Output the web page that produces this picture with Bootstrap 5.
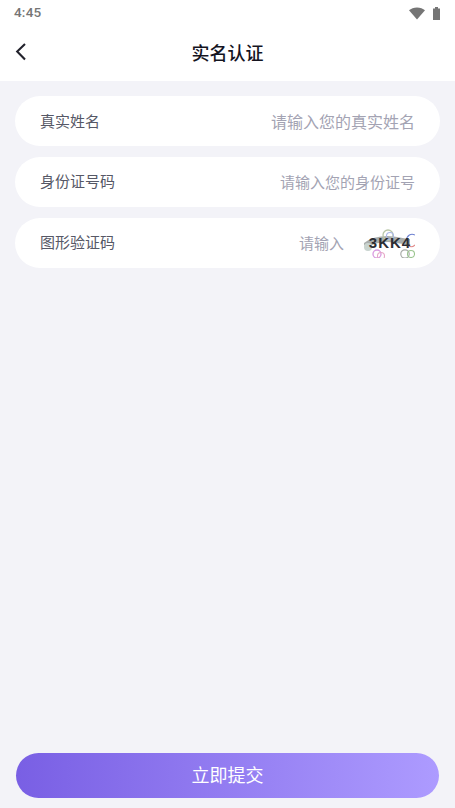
<!DOCTYPE html>
<html lang="zh-CN">
<head>
<meta charset="utf-8">
<title>实名认证</title>
<link rel="stylesheet" href="https://cdn.jsdelivr.net/npm/bootstrap@5.3.0/dist/css/bootstrap.min.css">
<style>
html,body{margin:0;height:808px;overflow:hidden}
body{font-family:"Noto Sans CJK SC","Roboto",sans-serif;background:#f3f3f8}
.screen{height:808px;background:#f3f3f8}
.topbar{background:#fff;height:81px}
.status-row{height:26px;padding:0 15px 0 14px;color:#757575}
.status-time{font:500 13.5px/1 Roboto,sans-serif;color:#757575;letter-spacing:.2px}
.title-row{height:55px}
.nav-title{font-size:18px;font-weight:500;color:#14141f;line-height:1;margin-top:-3px}
.back-btn{left:15px;top:50%;margin-top:-12px;line-height:0;background:none;border:0;padding:0}
.form-stack{padding:15px 15px 0;gap:10.4px}
.field-pill{height:50.4px;border-radius:25px;background:#fff;padding:0 25px}
.field-label{font-size:15px;color:#565866;line-height:1;white-space:nowrap;margin-top:-2px}
.field-input{border:0;outline:0;background:transparent;text-align:right;font-size:15px;padding:0;min-width:0;flex:1;font-family:inherit;color:#4f5160}
.field-input::placeholder{color:#a3a3b3;opacity:1}
.field-input.input-large{font-size:16px}
.captcha-box{margin-left:20px;width:51px;height:30px;flex:none;display:block}
.footer-area{padding:0 16px 10.5px}
.submit-btn{height:45px;border-radius:23px;border:0;background:linear-gradient(90deg,#795fe4,#ad9bff);color:#fff;font-size:18px;line-height:1;width:100%;padding:0 0 2px}
.submit-btn:hover{color:#fff}
</style>
</head>
<body>
<div class="screen d-flex flex-column">
  <div class="topbar">
    <div class="status-row d-flex justify-content-between align-items-center">
      <span class="status-time">4:45</span>
      <span class="d-flex align-items-center gap-2">
        <svg width="16" height="13" viewBox="0 0 16 13" aria-hidden="true"><path d="M0 3.3C2 1.4 4.8.4 8 .4s6 1 8 2.9L8 12.6z" fill="#757575"/></svg>
        <svg width="7" height="13" viewBox="0 0 7 13" aria-hidden="true"><path d="M2 0h3v1.4h2V13H0V1.4h2z" fill="#757575"/></svg>
      </span>
    </div>
    <div class="title-row position-relative d-flex align-items-center justify-content-center">
      <button class="back-btn position-absolute" type="button" aria-label="返回">
        <svg width="12" height="20" viewBox="0 0 12 20"><path d="M10 2 2.2 9.5 10 17.5" fill="none" stroke="#22222c" stroke-width="2.1"/></svg>
      </button>
      <span class="nav-title">实名认证</span>
    </div>
  </div>

  <form class="form-stack d-flex flex-column flex-grow-1">
    <div class="field-pill d-flex align-items-center">
      <span class="field-label">真实姓名</span>
      <input class="field-input input-large" type="text" placeholder="请输入您的真实姓名">
    </div>
    <div class="field-pill d-flex align-items-center">
      <span class="field-label">身份证号码</span>
      <input class="field-input" type="text" placeholder="请输入您的身份证号">
    </div>
    <div class="field-pill d-flex align-items-center">
      <span class="field-label">图形验证码</span>
      <input class="field-input" type="text" placeholder="请输入">
      <svg class="captcha-box" viewBox="0 0 51 30" aria-label="3KK4">
        <path d="M1 18C8 12 16 11 24 11s16 3 22 3" fill="none" stroke="#6f7675" stroke-width="6" opacity=".6"/>
        <circle cx="4" cy="19" r="4" fill="#c9d4cf"/>
        <circle cx="24" cy="7" r="5" fill="none" stroke="#b9c7a8" stroke-width="1.3"/>
        <circle cx="26" cy="8" r="3.5" fill="none" stroke="#a9b7e8" stroke-width="1.1"/>
        <path d="M42 13c1-6 5-8 9-6" fill="none" stroke="#6b7fd0" stroke-width="1.1"/>
        <path d="M44 17c3 3 5 2 7 0" fill="none" stroke="#e08a8a" stroke-width="1.1"/>
        <circle cx="13" cy="26" r="4" fill="none" stroke="#d99ae0" stroke-width="1.3"/>
        <circle cx="17" cy="28" r="3.5" fill="none" stroke="#e6a9c8" stroke-width="1.1"/>
        <circle cx="41" cy="26" r="4.2" fill="none" stroke="#a8aba8" stroke-width="1.2"/>
        <circle cx="47" cy="26" r="3.5" fill="none" stroke="#9bc58f" stroke-width="1.1"/>
        <text x="26" y="20" text-anchor="middle" font-family="Liberation Sans,sans-serif" font-weight="700" font-size="15" letter-spacing="1" fill="#2b2d33">3KK4</text>
      </svg>
    </div>
  </form>

  <div class="footer-area">
    <button class="btn submit-btn" type="button">立即提交</button>
  </div>
</div>
<script src="https://cdn.jsdelivr.net/npm/bootstrap@5.3.0/dist/js/bootstrap.bundle.min.js"></script>
</body>
</html>
